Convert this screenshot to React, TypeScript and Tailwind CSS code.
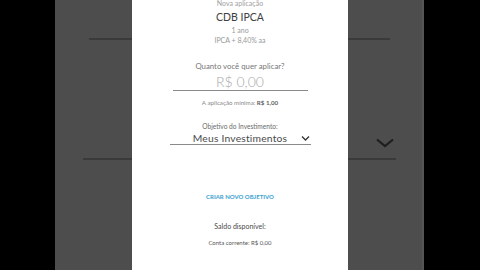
import React from 'react';

const font = { fontFamily: 'Lato, "Noto Sans", sans-serif' };

const App: React.FC = () => {
  return (
    <div className="flex w-[480px] h-[270px] overflow-hidden bg-black" style={font}>
      <div className="w-[55px] shrink-0 bg-black" />

      {/* blurred backdrop, left */}
      <div className="w-[77px] shrink-0 bg-[#4d4d4d] flex flex-col items-end pt-[38px]">
        <div className="w-[43px] h-[2px] bg-[#3a3a3a] blur-[0.5px]" />
        <div className="w-[49px] h-[2px] bg-[#3a3a3a] blur-[0.5px] mt-[118px]" />
      </div>

      {/* phone screen */}
      <div className="w-[216px] shrink-0 bg-white flex flex-col items-center text-center">
        <p className="text-[7px] leading-[7px] text-[#a0a0a0]">Nova aplicação</p>
        <h1 className="text-[10.5px] leading-[10px] text-[#404040] mt-[5px]">CDB IPCA</h1>
        <p className="text-[7px] leading-[7px] text-[#999] mt-[4.5px]">1 ano</p>
        <p className="text-[7px] leading-[7.5px] text-[#999] mt-[3.75px]">IPCA + 8,40% aa</p>

        <p className="text-[7.8px] leading-[7.5px] text-[#777] mt-[18.5px]">Quanto você quer aplicar?</p>
        <div className="w-[135px] border-b border-[#8a8a8a] mt-[3.25px]">
          <p className="text-[14px] leading-[16px] text-[#a8a8a8] font-light">R$ 0,00</p>
        </div>
        <p className="text-[6.2px] leading-[6.2px] text-[#888] mt-[9px]">
          A aplicação mínima: <span className="font-bold text-[#606060]">R$ 1,00</span>
        </p>

        <p className="text-[6.6px] leading-[6.8px] text-[#6a6a6a] mt-[16.5px]">Objetivo do Investimento:</p>
        <div className="w-[141px] border-b border-[#8a8a8a] mt-[2.6px] flex items-center justify-center relative h-[13px]">
          <span className="text-[10.3px] leading-none text-[#4a4a4a] tracking-[0.2px]">Meus Investimentos</span>
          <svg className="absolute right-[1px] top-[3px]" width="9" height="7" viewBox="0 0 9 7">
            <path d="M1 1.5 L4.5 5 L8 1.5" fill="none" stroke="#333" strokeWidth="1.3" />
          </svg>
        </div>

        <p className="text-[6px] leading-[6px] font-bold text-[#3a9fd0] mt-[49px]">CRIAR NOVO OBJETIVO</p>

        <p className="text-[7px] leading-[7px] text-[#4a4a4a] mt-[22.5px]">Saldo disponível:</p>
        <p className="text-[6px] leading-[6px] text-[#555] mt-[10.5px]">Conta corrente: R$ 0,00</p>
      </div>

      {/* blurred backdrop, right */}
      <div className="w-[76px] shrink-0 bg-[#4d4d4d] flex flex-col items-start pt-[38px] border-r-[2px] border-[#555]">
        <div className="w-[42px] h-[2px] bg-[#3a3a3a] blur-[0.5px]" />
        <svg className="ml-[27px] mt-[98px] blur-[0.4px]" width="20" height="10" viewBox="0 0 20 10">
          <path d="M2 1.5 L10 8 L18 1.5" fill="none" stroke="#1e1e1e" strokeWidth="2.2" />
        </svg>
        <div className="w-[48px] h-[2px] bg-[#3a3a3a] blur-[0.5px] mt-[10px]" />
      </div>

      <div className="flex-1 bg-black" />
    </div>
  );
};

export default App;
